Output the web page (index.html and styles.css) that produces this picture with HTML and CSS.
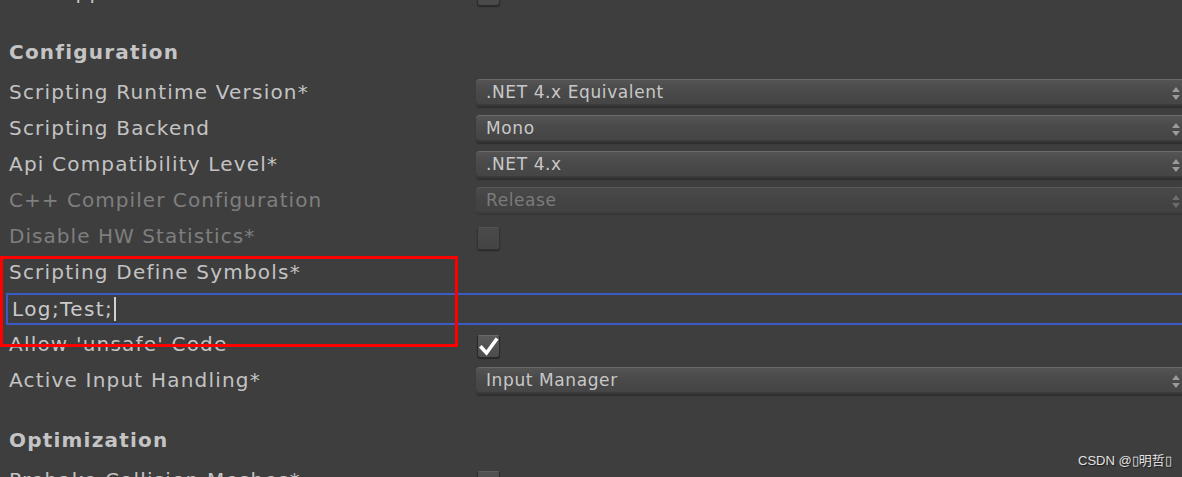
FILE: index.html
```html
<!DOCTYPE html>
<html>
<head>
<meta charset="utf-8">
<link rel="stylesheet" href="styles.css">
</head>
<body>
<div class="panel">
  <div class="row">
    <div class="label">Mac App Store Validation</div>
    <div class="field"><span class="check"></span></div>
  </div>

  <div class="header">Configuration</div>
  <div class="row">
    <div class="label">Scripting Runtime Version*</div>
    <div class="field"><div class="dropdown"><span>.NET 4.x Equivalent</span><svg class="arrows" width="8" height="13" viewBox="0 0 8 13"><path d="M4 0 L8 5 L0 5 Z M0 8 L8 8 L4 13 Z" fill="#9a9a9a"/></svg></div></div>
  </div>
  <div class="row">
    <div class="label">Scripting Backend</div>
    <div class="field"><div class="dropdown"><span>Mono</span><svg class="arrows" width="8" height="13" viewBox="0 0 8 13"><path d="M4 0 L8 5 L0 5 Z M0 8 L8 8 L4 13 Z" fill="#9a9a9a"/></svg></div></div>
  </div>
  <div class="row">
    <div class="label">Api Compatibility Level*</div>
    <div class="field"><div class="dropdown"><span>.NET 4.x</span><svg class="arrows" width="8" height="13" viewBox="0 0 8 13"><path d="M4 0 L8 5 L0 5 Z M0 8 L8 8 L4 13 Z" fill="#9a9a9a"/></svg></div></div>
  </div>
  <div class="row disabled">
    <div class="label">C++ Compiler Configuration</div>
    <div class="field"><div class="dropdown"><span>Release</span><svg class="arrows" width="8" height="13" viewBox="0 0 8 13"><path d="M4 0 L8 5 L0 5 Z M0 8 L8 8 L4 13 Z" fill="#6c6c6c"/></svg></div></div>
  </div>
  <div class="row disabled">
    <div class="label">Disable HW Statistics*</div>
    <div class="field"><span class="check"></span></div>
  </div>
  <div class="row">
    <div class="label">Scripting Define Symbols*</div>
  </div>
  <div class="row textrow">
    <div class="textfield"><span>Log;Test;</span><span class="caret"></span></div>
  </div>
  <div class="row">
    <div class="label">Allow 'unsafe' Code</div>
    <div class="field"><span class="check on"><svg width="23" height="23" viewBox="0 0 23 23"><path d="M4.5 12.5 L9.5 18 L19 5" fill="none" stroke="#ffffff" stroke-width="3.6" stroke-linecap="square" stroke-linejoin="miter"/></svg></span></div>
  </div>
  <div class="row">
    <div class="label">Active Input Handling*</div>
    <div class="field"><div class="dropdown"><span>Input Manager</span><svg class="arrows" width="8" height="13" viewBox="0 0 8 13"><path d="M4 0 L8 5 L0 5 Z M0 8 L8 8 L4 13 Z" fill="#9a9a9a"/></svg></div></div>
  </div>

  <div class="header">Optimization</div>
  <div class="row">
    <div class="label">Prebake Collision Meshes*</div>
    <div class="field"><span class="check"></span></div>
  </div>

  <div class="highlight"></div>
</div>
<div class="watermark">CSDN @▯明哲▯</div>
</body>
</html>
```
FILE: styles.css
```css
html, body {
  margin: 0;
  padding: 0;
  width: 1182px;
  height: 477px;
  overflow: hidden;
  background: #3e3e3e;
}

body {
  position: relative;
  font-family: "DejaVu Sans", Verdana, sans-serif;
  color: #c3c3c3;
}

.panel {
  position: relative;
  width: 1190px;
  margin-top: -26px;
}

.row {
  display: flex;
  height: 36px;
  align-items: flex-start;
}

.label {
  width: 467px;
  padding-left: 9px;
  font-size: 20px;
  letter-spacing: 1.2px;
  line-height: 36px;
  white-space: nowrap;
}

.disabled .label {
  letter-spacing: 1.05px;
  color: #7f7f7f;
}

.field {
  flex: 1;
  display: flex;
  height: 36px;
  align-items: flex-start;
}

.header {
  margin-top: 24px;
  margin-bottom: 4px;
  padding-left: 9px;
  height: 36px;
  line-height: 36px;
  font-size: 20px;
  letter-spacing: 1.2px;
  font-weight: bold;
  color: #c4c4c4;
}

.dropdown {
  margin-top: 5px;
  width: 714px;
  height: 27px;
  box-sizing: border-box;
  border-radius: 4px;
  border-top: 1px solid #6a6a6a;
  background: linear-gradient(#545454 0%, #4a4a4a 40%, #444444 100%);
  box-shadow: 0 1px 0 #2e2e2e, 0 2px 1px rgba(0,0,0,0.25), inset 0 -2px 0 #3a3a3a;
  display: flex;
  align-items: center;
  padding-left: 10px;
  padding-right: 10px;
  font-size: 17px;
  letter-spacing: 0.6px;
  color: #c8c8c8;
  position: relative;
}

.dropdown span {
  flex: 1;
  line-height: 24px;
  margin-top: -2px;
}

.arrows {
  flex: none;
}

.disabled .dropdown {
  color: #7b7b7b;
  border-top-color: #575757;
  background: linear-gradient(#4a4a4a 0%, #444444 40%, #414141 100%);
  box-shadow: 0 1px 0 #343434, inset 0 -2px 0 #3c3c3c;
}

.check {
  display: block;
  margin-top: 9px;
  margin-left: 1px;
  width: 23px;
  height: 23px;
  box-sizing: border-box;
  border-radius: 3px;
  border: 1px solid #2c2c2c;
  border-top-color: #5e5e5e;
  background: linear-gradient(#525252, #484848);
  box-shadow: 0 1px 1px rgba(0,0,0,0.4);
}

.check.on {
  border-color: #2a2a2a;
  border-top-color: #6a6a6a;
  background: linear-gradient(#5a5a5a, #4c4c4c);
}

.disabled .check {
  background: linear-gradient(#4a4a4a, #444444);
  border-color: #333333;
  border-top-color: #535353;
}

.check.on svg {
  display: block;
  margin: -1px 0 0 -1px;
}

.textrow {
  padding-top: 3px;
  box-sizing: border-box;
}

.textfield {
  margin-left: 6px;
  width: 1184px;
  height: 32px;
  box-sizing: border-box;
  border: 2px solid #3a5bc6;
  display: flex;
  align-items: center;
  padding-left: 4px;
  font-size: 20px;
  letter-spacing: 1.4px;
  color: #cbcbcb;
}

.textfield span:first-child {
  line-height: 28px;
}

.caret {
  display: inline-block;
  width: 2px;
  height: 24px;
  margin-left: 1px;
  background: #d0d0d0;
}

.highlight {
  position: absolute;
  left: 0;
  top: 282px;
  width: 458px;
  height: 91px;
  box-sizing: border-box;
  border: 3px solid #ff0000;
}

.watermark {
  position: absolute;
  left: 1078px;
  top: 450px;
  font-family: "Liberation Sans", "Noto Sans CJK SC", sans-serif;
  font-size: 13px;
  color: #e2e2e2;
  text-shadow: 1px 1px 1px #1e1e1e;
  white-space: nowrap;
}
```
